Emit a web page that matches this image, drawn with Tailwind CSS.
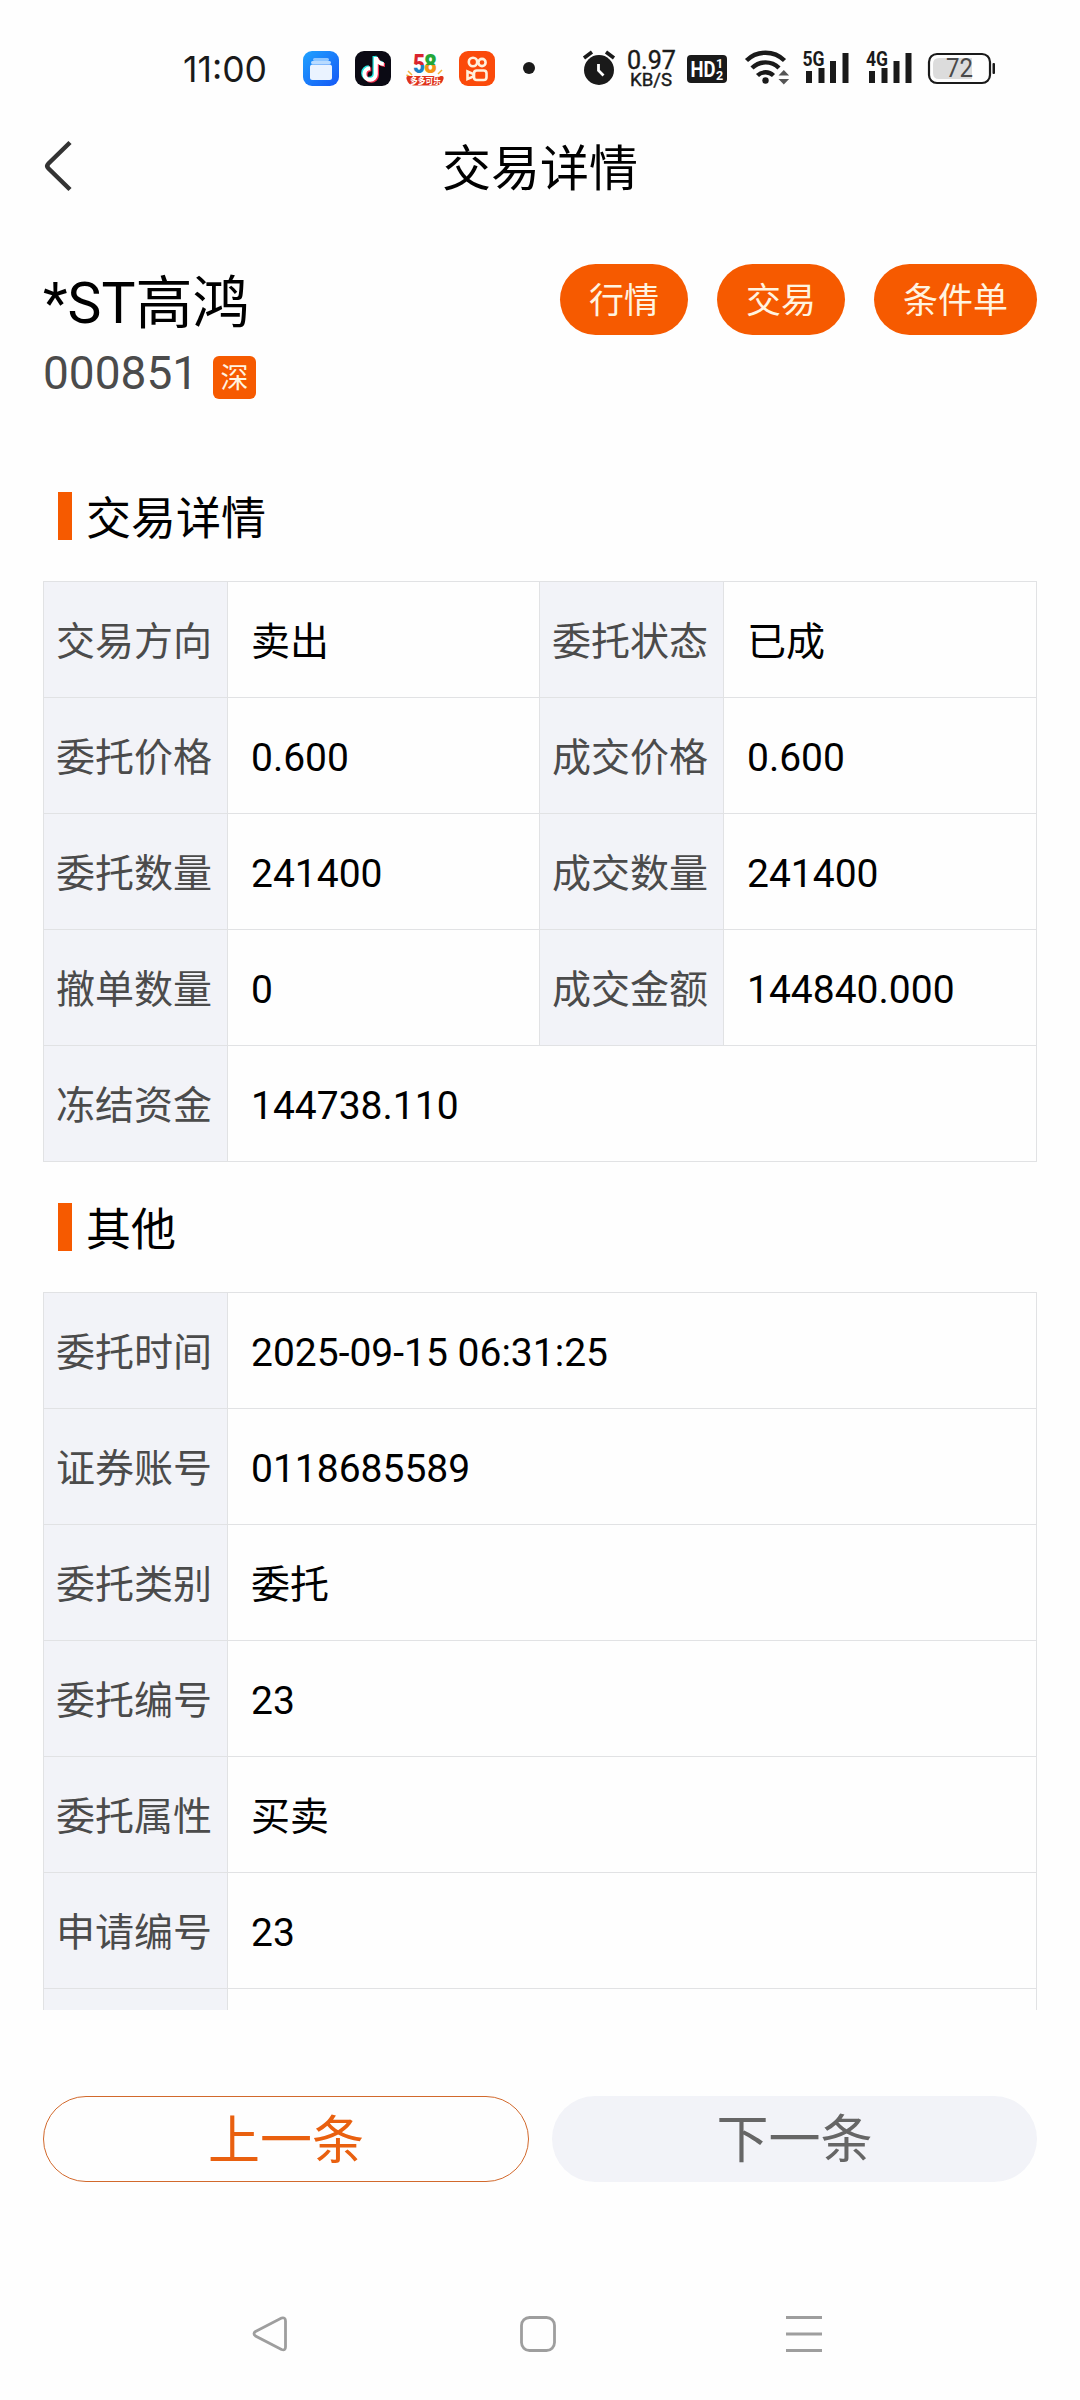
<!DOCTYPE html>
<html lang="zh-CN">
<head>
  <meta charset="UTF-8">
  <meta name="viewport" content="width=device-width, initial-scale=1">
  <title>交易详情</title>
  <script src="https://cdn.jsdelivr.net/npm/@tailwindcss/browser@4"></script>
</head>
<body class="bg-[#fefefe]">
<div class="w-[1080px] h-[2400px] flex flex-col overflow-hidden text-black font-[Roboto,'Noto_Sans_CJK_SC',sans-serif]">

  <!-- Status bar -->
  <svg class="block shrink-0 w-[1080px] h-[120px]" viewBox="0 0 1080 120" fill="#1a1a1a">
    <defs>
      <linearGradient id="blue" x1="0" y1="0" x2="1" y2="1">
        <stop offset="0" stop-color="#1fa2ff"/>
        <stop offset="1" stop-color="#1557f5"/>
      </linearGradient>
      <linearGradient id="five" x1="0" y1="0" x2="0" y2="1">
        <stop offset=".52" stop-color="#d9232e"/>
        <stop offset=".52" stop-color="#1b7fc4"/>
      </linearGradient>
      <linearGradient id="eight" x1="0" y1="0" x2="0" y2="1">
        <stop offset=".54" stop-color="#23a638"/>
        <stop offset=".54" stop-color="#f39316"/>
      </linearGradient>
    </defs>
    <text x="183" y="82" font-size="36" textLength="84" lengthAdjust="spacingAndGlyphs" class="font-[Inter]">11:00</text>

    <!-- files -->
    <rect x="303" y="51" width="36" height="35" rx="9" fill="url(#blue)"/>
    <rect x="313" y="58" width="16" height="3" rx="1.5" fill="#8fc6ff"/>
    <rect x="311" y="61" width="20" height="3" rx="1.5" fill="#b9dbff"/>
    <rect x="310" y="64.500" width="22" height="15.500" rx="2.500" fill="#eaf3ff"/>

    <!-- note -->
    <rect x="355" y="51" width="36" height="35" rx="9" fill="#0b0a14"/>
    <g fill="none" stroke-width="4">
      <path d="M374.500 56v17a5.700 5.700 0 1 1-5.700-5.700M374.500 56c.5 4 4 7 8 7" stroke="#25e5e0"/>
      <path d="M377 58v17a5.700 5.700 0 1 1-5.700-5.700M377 58c.5 4 4 7 8 7" stroke="#f5304f"/>
      <path d="M375.800 57v17a5.700 5.700 0 1 1-5.700-5.700M375.800 57c.5 4 4 7 8 7" stroke="#fff"/>
    </g>

    <!-- 58 -->
    <g font-size="26" font-weight="900">
      <text x="413" y="73" fill="url(#five)" textLength="12" lengthAdjust="spacingAndGlyphs">5</text>
      <text x="424" y="73" fill="url(#eight)" textLength="13" lengthAdjust="spacingAndGlyphs">8</text>
    </g>
    <path d="M408 71l4 4M406.500 75l3 1.500M442 70l-4 4" stroke="#f3b23a" stroke-width="1.500"/>
    <path d="M408 76h34q2 0 1.500 3-2 6-7 6.500h-23q-5-.5-7-6.500-.5-3 1.500-3z" fill="#e0331c"/>
    <text x="410" y="84" font-size="9" textLength="31" lengthAdjust="spacingAndGlyphs" font-weight="bold" fill="#fff" class="font-['Noto_Sans_CJK_SC']">多多可乐</text>

    <!-- camera -->
    <rect x="459" y="51" width="36" height="35" rx="9" fill="#fb4a0a"/>
    <g fill="none" stroke="#fff1dc" stroke-width="2.600">
      <circle cx="473" cy="62" r="4.200"/>
      <circle cx="482" cy="62.500" r="3.600"/>
      <rect x="474" y="70.500" width="12.500" height="9.500" rx="2.800"/>
      <path d="M467.500 71.500v7.500l6-2.500v-2.500z"/>
    </g>
    <circle cx="529" cy="68" r="6"/>

    <!-- alarm -->
    <circle cx="599" cy="70" r="15"/>
    <path d="M584 58l8-6M614 58l-8-6" stroke="#1a1a1a" stroke-width="3.600"/>
    <path d="M598.500 64v6.500l5 5" fill="none" stroke="#fff" stroke-width="2.800"/>

    <!-- network speed -->
    <text x="627" y="69" font-size="25" textLength="49" lengthAdjust="spacingAndGlyphs" stroke="#1a1a1a" stroke-width=".4">0.97</text>
    <text x="630" y="86" font-size="18" textLength="42" lengthAdjust="spacingAndGlyphs" stroke="#1a1a1a" stroke-width=".4">KB/S</text>

    <!-- HD -->
    <rect x="687" y="55" width="40" height="28" rx="4"/>
    <g fill="#fff" font-weight="bold">
      <text x="690.500" y="77" font-size="22" textLength="25" lengthAdjust="spacingAndGlyphs">HD</text>
      <text x="716" y="67.500" font-size="12.500">1</text>
      <text x="716" y="80" font-size="12.500">2</text>
    </g>

    <!-- wifi -->
    <g fill="none" stroke="#1a1a1a" stroke-width="4.400">
      <path d="M746.500 60.500a27 27 0 0 1 38 0"/>
      <path d="M752 68a19 19 0 0 1 27 0"/>
      <path d="M757.500 75.500a11.500 11.500 0 0 1 16 0"/>
    </g>
    <circle cx="765.500" cy="80.500" r="3.200"/>
    <path d="M778.500 75.500l5.300-5.500 5.300 5.500zM778.500 79l5.300 5.500 5.300-5.500z" fill="#555"/>

    <!-- signal -->
    <text x="802.500" y="66" font-size="20.500" font-weight="bold" textLength="22" lengthAdjust="spacingAndGlyphs">5G</text>
    <path d="M806 71h6v12h-6zM818.500 68h6v15h-6zM830 61h6v22h-6zM842.500 53h6v30h-6z"/>
    <text x="866" y="66" font-size="20.500" font-weight="bold" textLength="22" lengthAdjust="spacingAndGlyphs">4G</text>
    <path d="M869 71h6v12h-6zM881.500 68h6v15h-6zM893.500 61h6v22h-6zM905.500 53h6v30h-6z"/>

    <!-- battery -->
    <rect x="929" y="54" width="61" height="29" rx="8" fill="none" stroke="#1a1a1a" stroke-width="2.200"/>
    <path d="M939 58h33v21h-33q-6 0-6-6v-9q0-6 6-6z" fill="#dcdcdc"/>
    <rect x="992.500" y="63" width="2.500" height="11" rx="1"/>
    <text x="946" y="77" font-size="25" fill="#4a4a4a" textLength="27" lengthAdjust="spacingAndGlyphs">72</text>
  </svg>

  <!-- Title bar -->
  <header class="h-24 shrink-0 px-[43px] flex items-center">
    <svg class="w-8 h-14 mb-1" viewBox="0 0 32 56" fill="none" stroke="#333" stroke-width="4.500">
      <path d="M27 4.500L5.500 25.500Q3 28 5.500 30.500L27 51.500" />
    </svg>
    <h1 class="flex-1 text-center text-[49px] leading-[96px] pt-[3px] pr-8">交易详情</h1>
  </header>

  <!-- Stock -->
  <section class="shrink-0 h-[245px] pt-12 px-[43px] flex justify-between items-start">
    <div>
      <div class="text-[57px] h-[76px] leading-[80px]">*ST高鸿</div>
      <div class="flex items-center h-[66px] text-[#4b4b4b]">
        <span class="text-[46px] leading-[66px]">000851</span>
        <span class="ml-[15px] mt-[9px] size-[43px] rounded-md bg-[#f65a00] text-[#fff4e0] text-[28px] leading-[46px] text-center">深</span>
      </div>
    </div>
    <div class="flex gap-[29px] text-[35px] h-[71px] leading-[76px] text-[#fff4e0]">
      <span class="h-[71px] rounded-full bg-[#f65a00] px-[29px]">行情</span>
      <span class="h-[71px] rounded-full bg-[#f65a00] px-[29px]">交易</span>
      <span class="h-[71px] rounded-full bg-[#f65a00] px-[29px]">条件单</span>
    </div>
  </section>

  <!-- Details -->
  <main class="shrink-0 h-[1549px] overflow-hidden px-[43px]">
    <div class="h-[120px] pt-[31px] pl-[15px] flex">
      <i class="w-3.5 h-12 bg-[#f65a00]"></i>
      <h2 class="ml-3.5 text-[45px] leading-[55px]">交易详情</h2>
    </div>
    <div class="grid grid-cols-[184px_312px_184px_313px] auto-rows-[116px] w-[994px] border-l border-t border-[#e1e2e4] text-[39px] leading-[121px] *:border-r *:border-b *:border-[#e1e2e4] *:overflow-hidden *:whitespace-nowrap">
      <div class="bg-[#f2f3f8] text-[#4b4b4b] pl-3">交易方向</div>
      <div class="pl-[23px]">卖出</div>
      <div class="bg-[#f2f3f8] text-[#4b4b4b] pl-3">委托状态</div>
      <div class="pl-[23px]">已成</div>

      <div class="bg-[#f2f3f8] text-[#4b4b4b] pl-3">委托价格</div>
      <div class="pl-[23px]">0.600</div>
      <div class="bg-[#f2f3f8] text-[#4b4b4b] pl-3">成交价格</div>
      <div class="pl-[23px]">0.600</div>

      <div class="bg-[#f2f3f8] text-[#4b4b4b] pl-3">委托数量</div>
      <div class="pl-[23px]">241400</div>
      <div class="bg-[#f2f3f8] text-[#4b4b4b] pl-3">成交数量</div>
      <div class="pl-[23px]">241400</div>

      <div class="bg-[#f2f3f8] text-[#4b4b4b] pl-3">撤单数量</div>
      <div class="pl-[23px]">0</div>
      <div class="bg-[#f2f3f8] text-[#4b4b4b] pl-3">成交金额</div>
      <div class="pl-[23px]">144840.000</div>

      <div class="bg-[#f2f3f8] text-[#4b4b4b] pl-3">冻结资金</div>
      <div class="pl-[23px] col-span-3">144738.110</div>
    </div>

    <div class="h-[130px] pt-[41px] pl-[15px] flex">
      <i class="w-3.5 h-12 bg-[#f65a00]"></i>
      <h2 class="ml-3.5 text-[45px] leading-[55px]">其他</h2>
    </div>
    <div class="grid grid-cols-[184px_809px] auto-rows-[116px] w-[994px] border-l border-t border-[#e1e2e4] text-[39px] leading-[121px] *:border-r *:border-b *:border-[#e1e2e4] *:overflow-hidden *:whitespace-nowrap">
      <div class="bg-[#f2f3f8] text-[#4b4b4b] pl-3">委托时间</div>
      <div class="pl-[23px]">2025-09-15 06:31:25</div>
      <div class="bg-[#f2f3f8] text-[#4b4b4b] pl-3">证券账号</div>
      <div class="pl-[23px]">0118685589</div>
      <div class="bg-[#f2f3f8] text-[#4b4b4b] pl-3">委托类别</div>
      <div class="pl-[23px]">委托</div>
      <div class="bg-[#f2f3f8] text-[#4b4b4b] pl-3">委托编号</div>
      <div class="pl-[23px]">23</div>
      <div class="bg-[#f2f3f8] text-[#4b4b4b] pl-3">委托属性</div>
      <div class="pl-[23px]">买卖</div>
      <div class="bg-[#f2f3f8] text-[#4b4b4b] pl-3">申请编号</div>
      <div class="pl-[23px]">23</div>
      <div class="bg-[#f2f3f8]"></div>
      <div></div>
    </div>
  </main>

  <!-- Pager -->
  <div class="shrink-0 mt-[86px] px-[43px] flex justify-between text-[52px] text-center">
    <button class="w-[486px] h-[86px] rounded-full border border-[#d2692c] text-[#e9600f] leading-[84px] pt-[3px]">上一条</button>
    <button class="w-[485px] h-[86px] rounded-full bg-[#f2f3f8] text-[#666] leading-[84px] pt-[3px]">下一条</button>
  </div>

  <!-- System navigation -->
  <nav class="mt-[134px] pl-[252px] flex">
    <svg class="size-9" viewBox="0 0 36 36" fill="none" stroke="#9e9e9e" stroke-width="2.800"><path d="M3.500 15.500L29.500 2Q33.500 1 33.500 5V31Q33.500 35 29.500 33.500L3.500 20Q.5 17.500 3.500 15.500z"/></svg>
    <svg class="size-9 ml-[232px]" viewBox="0 0 36 36" fill="none" stroke="#9e9e9e" stroke-width="2.800"><rect x="1.500" y="1.500" width="33" height="33" rx="8"/></svg>
    <svg class="size-9 ml-[230px]" viewBox="0 0 36 36" fill="none" stroke="#9e9e9e" stroke-width="3"><path d="M0 1.500h36M0 18h36M0 34.500h36"/></svg>
  </nav>
</div>
</body>
</html>
